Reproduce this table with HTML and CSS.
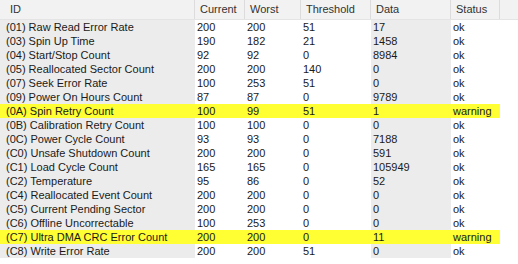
FILE: index.html
```html
<!DOCTYPE html>
<html>
<head>
<meta charset="utf-8">
<link rel="stylesheet" href="styles.css">
</head>
<body>
<div class="list">
  <div class="row head">
    <div class="c id">ID</div><div class="c">Current</div><div class="c">Worst</div><div class="c">Threshold</div><div class="c">Data</div><div class="c">Status</div>
  </div>
  <div class="row"><div class="c id">(01) Raw Read Error Rate</div><div class="c">200</div><div class="c">200</div><div class="c">51</div><div class="c data">17</div><div class="c">ok</div></div>
  <div class="row"><div class="c id">(03) Spin Up Time</div><div class="c">190</div><div class="c">182</div><div class="c">21</div><div class="c data">1458</div><div class="c">ok</div></div>
  <div class="row"><div class="c id">(04) Start/Stop Count</div><div class="c">92</div><div class="c">92</div><div class="c">0</div><div class="c data">8984</div><div class="c">ok</div></div>
  <div class="row"><div class="c id">(05) Reallocated Sector Count</div><div class="c">200</div><div class="c">200</div><div class="c">140</div><div class="c data">0</div><div class="c">ok</div></div>
  <div class="row"><div class="c id">(07) Seek Error Rate</div><div class="c">100</div><div class="c">253</div><div class="c">51</div><div class="c data">0</div><div class="c">ok</div></div>
  <div class="row"><div class="c id">(09) Power On Hours Count</div><div class="c">87</div><div class="c">87</div><div class="c">0</div><div class="c data">9789</div><div class="c">ok</div></div>
  <div class="row warn"><div class="c id">(0A) Spin Retry Count</div><div class="c">100</div><div class="c">99</div><div class="c">51</div><div class="c data">1</div><div class="c">warning</div></div>
  <div class="row"><div class="c id">(0B) Calibration Retry Count</div><div class="c">100</div><div class="c">100</div><div class="c">0</div><div class="c data">0</div><div class="c">ok</div></div>
  <div class="row"><div class="c id">(0C) Power Cycle Count</div><div class="c">93</div><div class="c">93</div><div class="c">0</div><div class="c data">7188</div><div class="c">ok</div></div>
  <div class="row"><div class="c id">(C0) Unsafe Shutdown Count</div><div class="c">200</div><div class="c">200</div><div class="c">0</div><div class="c data">591</div><div class="c">ok</div></div>
  <div class="row"><div class="c id">(C1) Load Cycle Count</div><div class="c">165</div><div class="c">165</div><div class="c">0</div><div class="c data">105949</div><div class="c">ok</div></div>
  <div class="row"><div class="c id">(C2) Temperature</div><div class="c">95</div><div class="c">86</div><div class="c">0</div><div class="c data">52</div><div class="c">ok</div></div>
  <div class="row"><div class="c id">(C4) Reallocated Event Count</div><div class="c">200</div><div class="c">200</div><div class="c">0</div><div class="c data">0</div><div class="c">ok</div></div>
  <div class="row"><div class="c id">(C5) Current Pending Sector</div><div class="c">200</div><div class="c">200</div><div class="c">0</div><div class="c data">0</div><div class="c">ok</div></div>
  <div class="row"><div class="c id">(C6) Offline Uncorrectable</div><div class="c">100</div><div class="c">253</div><div class="c">0</div><div class="c data">0</div><div class="c">ok</div></div>
  <div class="row warn"><div class="c id">(C7) Ultra DMA CRC Error Count</div><div class="c">200</div><div class="c">200</div><div class="c">0</div><div class="c data">11</div><div class="c">warning</div></div>
  <div class="row"><div class="c id">(C8) Write Error Rate</div><div class="c">200</div><div class="c">200</div><div class="c">51</div><div class="c data">0</div><div class="c">ok</div></div>
</div>
</body>
</html>
```
FILE: styles.css
```css
html, body {
  margin: 0;
  padding: 0;
  background: #ffffff;
}
.list {
  width: 518px;
  font-family: "Liberation Sans", Arial, sans-serif;
  font-size: 11px;
  color: #1a1a1a;
}
.row {
  display: grid;
  grid-template-columns: 195px 50px 56px 70px 80px 49px;
  height: 14px;
  line-height: 14px;
}
.c {
  padding-left: 2px;
  white-space: nowrap;
  overflow: hidden;
}
.c.id {
  padding-left: 6px;
  background: #ececec;
}
.c.data {
  background: #ececec;
}
.row.warn .c {
  background: #ffff33;
}
.row.head {
  height: 20px;
  line-height: 19px;
  background: #f2f2f2;
  border-bottom: 1px solid #e4e4e4;
  box-sizing: border-box;
}
.row.head .c {
  background: none;
  padding-left: 5px;
  border-right: 1px solid #dcdcdc;
  color: #333;
}
.row.head .c.id {
  padding-left: 10px;
}
```
